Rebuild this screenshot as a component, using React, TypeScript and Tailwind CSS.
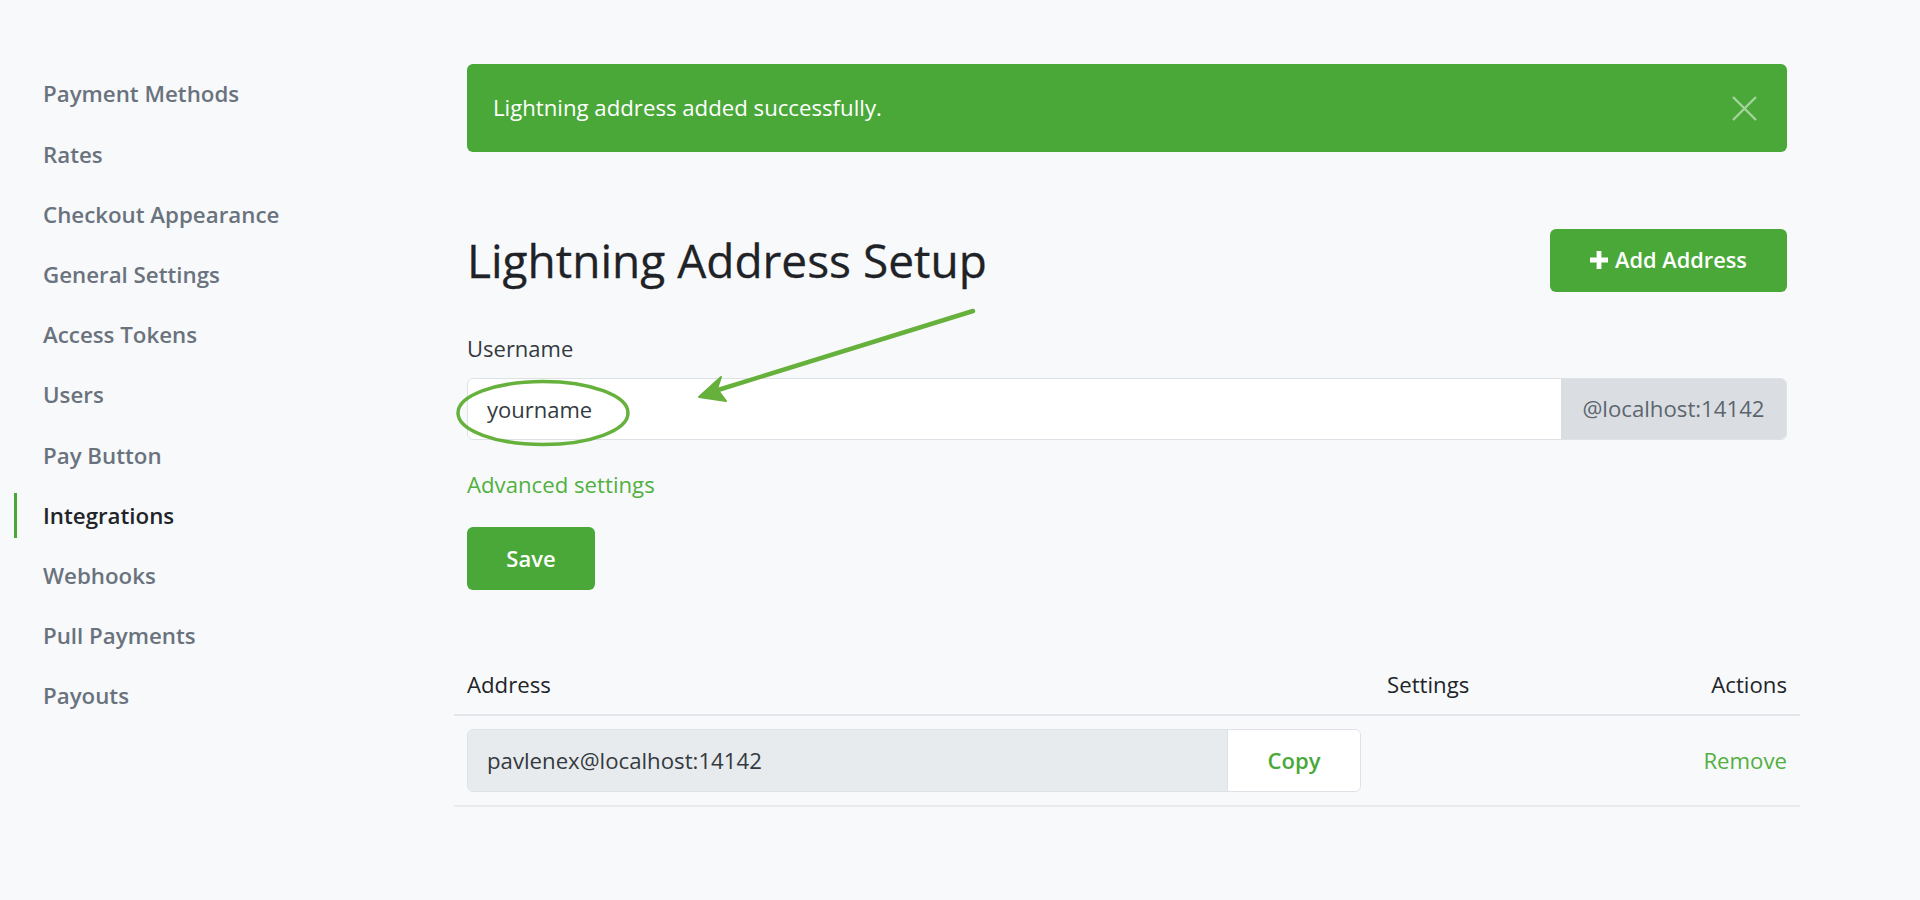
import React from 'react';

const navItems = [
  'Payment Methods',
  'Rates',
  'Checkout Appearance',
  'General Settings',
  'Access Tokens',
  'Users',
  'Pay Button',
  'Integrations',
  'Webhooks',
  'Pull Payments',
  'Payouts',
];

function Sidebar() {
  return (
    <nav className="flex w-[454px] shrink-0 flex-col pt-[64px]">
      {navItems.map((item) => {
        const active = item === 'Integrations';
        return (
          <a key={item} className="flex h-[60.2px] items-center">
            <span
              className={`ml-[14px] h-[45px] w-[3px] ${active ? 'bg-[#49a838]' : 'bg-transparent'}`}
            />
            <span
              className={`ml-[26px] text-[22.3px] font-semibold ${active ? 'text-[#212529]' : 'text-[#6a737d]'}`}
            >
              {item}
            </span>
          </a>
        );
      })}
    </nav>
  );
}

function Annotation() {
  return (
    <svg
      className="pointer-events-none absolute left-0 top-0"
      width="1920"
      height="900"
      viewBox="0 0 1920 900"
    >
      <ellipse cx="543" cy="413" rx="85" ry="31.5" fill="none" stroke="#66b13c" strokeWidth="3.5" />
      <line x1="973" y1="311" x2="718" y2="390" stroke="#66b13c" strokeWidth="4.5" strokeLinecap="round" />
      <polygon points="699,397 721,377 717,389 726,401" fill="#66b13c" stroke="#66b13c" strokeWidth="2" strokeLinejoin="round" />
    </svg>
  );
}

export default function App() {
  return (
    <div
      className="relative flex h-[900px] w-full bg-[#f8f9fb] text-[#212529]"
      style={{ fontFamily: '"Open Sans", "Noto Sans", sans-serif' }}
    >
      <Sidebar />

      <main className="ml-[13px] flex w-[1320px] flex-col pt-[64px]">
        {/* success alert */}
        <div className="flex h-[88px] items-center justify-between rounded-[6px] bg-[#49a838] pl-[26px] pr-[30px]">
          <span className="text-[22.2px] text-white">Lightning address added successfully.</span>
          <svg width="25" height="25" viewBox="0 0 25 25" className="opacity-50">
            <path d="M1 1 L24 24 M24 1 L1 24" stroke="#ffffff" strokeWidth="2.4" />
          </svg>
        </div>

        <div className="mt-[77px] flex h-[62px] items-center justify-between">
          <h2 className="text-[46px] font-normal leading-none text-[#1f2327] [-webkit-text-stroke:0.3px_#1f2327]">
            Lightning Address Setup
          </h2>
          <button className="flex h-[63px] w-[237px] items-center justify-center gap-[7px] rounded-[6px] bg-[#49a838] text-[21.8px] font-semibold text-white">
            <svg width="18" height="18" viewBox="0 0 18 18">
              <path d="M6.6 0h4.8v6.6H18v4.8h-6.6V18H6.6v-6.6H0V6.6h6.6z" fill="#ffffff" />
            </svg>
            Add Address
          </button>
        </div>

        <label className="mt-[42px] text-[22px] leading-[30px] text-[#343a40]">Username</label>
        <div className="mt-[15px] flex h-[62px] overflow-hidden rounded-[6px] border border-[#dee2e6] bg-white">
          <div className="flex flex-1 items-center pl-[19px] text-[22px] text-[#343a40]">yourname</div>
          <div className="flex w-[225px] items-center justify-center bg-[#dadee2] text-[22.2px] text-[#5d666f]">
            @localhost:14142
          </div>
        </div>

        <a className="mt-[30px] text-[22.2px] leading-[30px] text-[#52b03f]">Advanced settings</a>

        <button className="mt-[27px] flex h-[63px] w-[128px] items-center justify-center rounded-[6px] bg-[#49a838] text-[22px] font-semibold text-white">
          Save
        </button>

        <div className="-mx-[13px] mt-[65px] flex flex-col">
          <div className="grid h-[61px] grid-cols-[920px_1fr_auto] items-center border-b-2 border-[#e3e6ea] text-[22.2px] text-[#212529]">
            <div className="px-[13px]">Address</div>
            <div className="px-[13px]">Settings</div>
            <div className="px-[13px] text-right">Actions</div>
          </div>
          <div className="grid grid-cols-[920px_1fr_auto] items-center border-b-2 border-[#e9ecef] py-[13px]">
            <div className="px-[13px]">
              <div className="flex h-[63px] overflow-hidden rounded-[6px] border border-[#dee2e6]">
                <div className="flex flex-1 items-center bg-[#e8ebee] pl-[19px] text-[22.2px] text-[#343a40]">
                  pavlenex@localhost:14142
                </div>
                <button className="w-[133px] border-l border-[#dee2e6] bg-white text-[22px] font-semibold text-[#49a838]">
                  Copy
                </button>
              </div>
            </div>
            <div className="px-[13px]" />
            <div className="px-[13px] text-right text-[22.2px] text-[#52b03f]">Remove</div>
          </div>
        </div>
      </main>

      <Annotation />
    </div>
  );
}
